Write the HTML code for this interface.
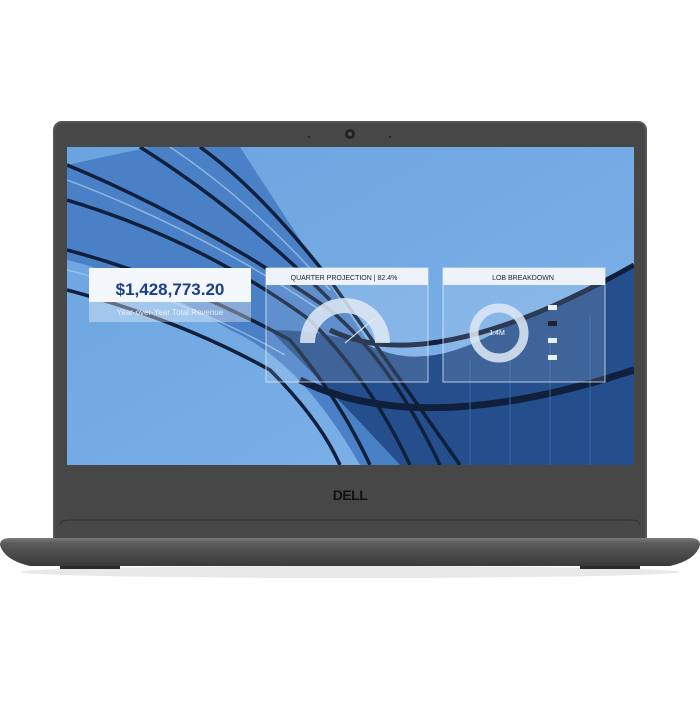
<!DOCTYPE html><html><head><style>body{margin:0;background:#fff;width:700px;height:700px;overflow:hidden}</style></head><body>
<svg width="700" height="700" viewBox="0 0 700 700" xmlns="http://www.w3.org/2000/svg" font-family="Liberation Sans, sans-serif">
<defs>
<linearGradient id="bg" x1="0" y1="0" x2="1" y2="1"><stop offset="0" stop-color="#6aa4e0"/><stop offset="1" stop-color="#7fb2e8"/></linearGradient>
<linearGradient id="base" x1="0" y1="0" x2="0" y2="1"><stop offset="0" stop-color="#7a7a7a"/><stop offset="0.2" stop-color="#5a5a5a"/><stop offset="1" stop-color="#3a3a3a"/></linearGradient>
<clipPath id="scr"><rect x="67" y="147" width="567" height="318"/></clipPath>
</defs>
<ellipse cx="350" cy="572" rx="330" ry="6" fill="#e8e8e8"/>
<rect x="53" y="121" width="594" height="425" rx="9" fill="#555"/>
<rect x="55" y="123" width="590" height="421" rx="8" fill="#474747"/>
<rect x="67" y="147" width="567" height="318" fill="url(#bg)"/>
<g clip-path="url(#scr)">
<path d="M67,165 L150,147 L240,147 Q300,240 340,300 Q380,360 450,465 L360,465 Q300,360 230,330 Q150,280 67,260 Z" fill="#4a80c6"/>
<path d="M270,330 Q330,330 380,350 Q430,370 500,330 Q580,290 634,265 L634,465 L400,465 Q340,400 270,330Z" fill="#244f8c"/>
<g stroke="#0f1f3c" fill="none" stroke-width="3.5">
<path d="M67,165 Q200,220 330,310 Q390,360 440,465"/>
<path d="M67,200 Q200,240 310,320 Q370,380 410,465"/>
<path d="M140,147 Q240,210 330,300"/>
<path d="M67,250 Q180,280 290,340 Q340,400 370,465"/>
<path d="M67,290 Q180,320 270,370 Q320,420 340,465"/>
<path d="M200,147 Q260,190 330,280 Q400,380 460,465"/>
<path d="M300,380 Q420,440 634,370" stroke-width="7"/>
<path d="M330,330 Q430,380 634,265" stroke-width="5"/>
</g>
<g stroke="#a8ccef" stroke-width="1.5" fill="none" opacity=".7">
<path d="M67,180 Q200,230 320,310"/><path d="M67,270 Q190,300 285,355"/><path d="M170,147 Q250,200 330,290"/>
</g>
<g stroke="#3568a8" stroke-width="1"><path d="M470,360 V465M510,350 V465M550,335 V465M590,315 V465"/></g>
</g>
<rect x="89" y="268" width="162" height="54" fill="#fff" opacity=".35"/>
<rect x="89" y="268" width="162" height="34" fill="#f4f7fb"/>
<text x="170" y="295" text-anchor="middle" font-size="17" font-weight="bold" fill="#1b3f8a">$1,428,773.20</text>
<text x="170" y="315" text-anchor="middle" font-size="8" fill="#eef">Year-over-Year Total Revenue</text>
<rect x="266" y="268" width="162" height="114" fill="#fff" fill-opacity=".12" stroke="#dde8f5" stroke-width=".8"/>
<rect x="266" y="268" width="162" height="17" fill="#eef3fa"/>
<text x="344" y="280" text-anchor="middle" font-size="7" fill="#223">QUARTER PROJECTION | 82.4%</text>
<path d="M300,343 A45,45 0 0 1 390,343 L375,343 A30,30 0 0 0 315,343 Z" fill="#dfe9f5" opacity=".85"/>
<line x1="345" y1="343" x2="375" y2="318" stroke="#eee"/>
<rect x="443" y="268" width="162" height="114" fill="#fff" fill-opacity=".12" stroke="#dde8f5" stroke-width=".8"/>
<rect x="443" y="268" width="162" height="17" fill="#eef3fa"/>
<text x="523" y="280" text-anchor="middle" font-size="7" fill="#223">LOB BREAKDOWN</text>
<circle cx="499" cy="333" r="25" fill="none" stroke="#dfe9f5" stroke-width="9" opacity=".85"/>
<text x="497" y="335" text-anchor="middle" font-size="7" fill="#fff">1.4M</text>
<g fill="#e8eef7"><rect x="548" y="305" width="9" height="5"/><rect x="548" y="321" width="9" height="5" fill="#223"/><rect x="548" y="338" width="9" height="5"/><rect x="548" y="355" width="9" height="5"/></g>
<circle cx="350" cy="134" r="5" fill="#222"/><circle cx="350" cy="134" r="2" fill="#555"/>
<circle cx="309" cy="137" r="1" fill="#222"/><circle cx="390" cy="137" r="1" fill="#222"/>
<text x="350" y="500" text-anchor="middle" font-size="14" font-weight="bold" fill="#111" letter-spacing="-0.5">DELL</text>
<path d="M60,525 Q60,520 70,520 L630,520 Q640,520 640,525" fill="none" stroke="#333"/>
<path d="M10,538 Q0,538 0,545 Q4,560 30,566 L670,566 Q696,560 700,545 Q700,538 690,538 Z" fill="url(#base)"/>
<rect x="60" y="566" width="60" height="3" fill="#2a2a2a"/><rect x="580" y="566" width="60" height="3" fill="#2a2a2a"/>
</svg>
</body></html>
